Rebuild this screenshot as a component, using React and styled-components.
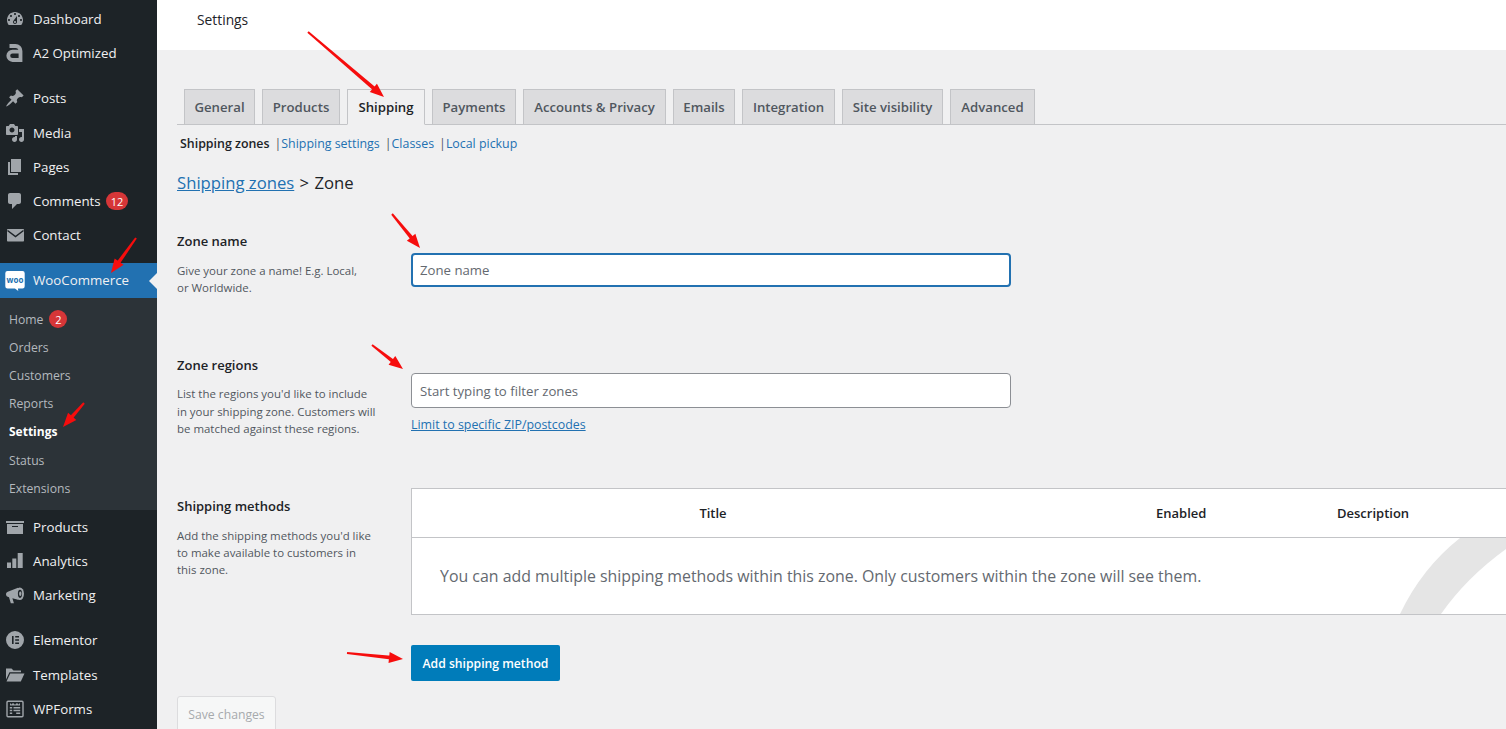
import React from 'react';
import styled, { createGlobalStyle } from 'styled-components';

const GlobalStyle = createGlobalStyle`
  html, body {
    margin: 0;
    padding: 0;
    height: 729px;
    overflow: hidden;
    background: #f0f0f1;
    font-family: "Open Sans", "Noto Sans", sans-serif;
  }
  * { box-sizing: border-box; }
`;

const Page = styled.div`
  position: relative;
  display: flex;
  width: 1506px;
  height: 729px;
  overflow: hidden;
`;

const Sidebar = styled.nav`
  width: 157px;
  flex: none;
  padding-top: 2.05px;
  background: #1d2327;
`;

const MenuItem = styled.div`
  position: relative;
  display: flex;
  align-items: center;
  gap: 8px;
  height: ${(p) => (p.$current ? '35px' : '34.25px')};
  margin-top: ${(p) => (p.$separated ? '10.75px' : '0')};
  padding-left: 5px;
  background: ${(p) => (p.$current ? '#2271b1' : 'transparent')};
  color: #f0f0f1;
  font-size: 13.3px;
  white-space: nowrap;
`;

const MenuLabel = styled.span`
  position: relative;
  top: ${(p) => (p.$current ? '-0.5px' : '0')};
`;

const MenuIcon = styled.svg`
  width: 20px;
  height: 20px;
  flex: none;
  fill: #a0a5aa;
`;

const CurrentNotch = styled.span`
  position: absolute;
  right: 0;
  top: 10px;
  border: 8px solid transparent;
  border-left: 0;
  border-right-color: #f0f0f1;
`;

const Badge = styled.span`
  display: inline-flex;
  align-items: center;
  justify-content: center;
  min-width: 18px;
  height: 18px;
  margin-left: ${(p) => p.$offset}px;
  padding: 0 5px;
  border-radius: 9px;
  background: #d63638;
  color: #fff;
  font-size: 11px;
`;

const SubMenu = styled.div`
  padding: 7px 0 7.5px;
  background: #2c3338;
`;

const SubItem = styled.div`
  display: flex;
  align-items: center;
  height: 28.15px;
  padding-left: 9px;
  color: ${(p) => (p.$active ? '#fff' : '#b4b9be')};
  font-size: ${(p) => (p.$active ? '12px' : '12.2px')};
  font-weight: ${(p) => (p.$active ? 700 : 400)};
`;

const Main = styled.main`
  flex: 1;
  min-width: 0;
`;

const TopBar = styled.header`
  display: flex;
  align-items: center;
  height: 50px;
  padding: 0 0 11px 40px;
  background: #fff;
  color: #1d2327;
  font-size: 13.8px;
`;

const Content = styled.div`
  padding-left: 20px;
`;

const Tabs = styled.div`
  display: flex;
  gap: 7px;
  height: 36px;
  margin-top: 39px;
  padding-left: 7px;
  border-bottom: 1px solid #c3c4c7;
`;

const Tab = styled.div`
  width: ${(p) => p.$width}px;
  height: 36px;
  border: 1px solid #c3c4c7;
  border-bottom-color: ${(p) => (p.$active ? '#f0f0f1' : '#c3c4c7')};
  background: ${(p) => (p.$active ? '#f0f0f1' : '#dcdcde')};
  color: ${(p) => (p.$active ? '#1d2327' : '#50575e')};
  font-size: 13.2px;
  font-weight: 600;
  line-height: 34px;
  text-align: center;
  white-space: nowrap;
`;

const SubNav = styled.div`
  display: flex;
  align-items: center;
  height: 18px;
  margin-top: 9px;
  padding-left: 3px;
  color: #50575e;
  font-size: 12.4px;
`;

const SubNavCurrent = styled.span`
  color: #1d2327;
  font-weight: 600;
`;

const SubNavLink = styled.span`
  color: #2271b1;
`;

const SubNavBar = styled.span`
  margin-left: 5px;
`;

const Heading = styled.h2`
  height: 24px;
  margin: 19px 0 0;
  color: #1d2327;
  font-size: 16.7px;
  font-weight: 500;
  line-height: 24px;
  word-spacing: 1px;
`;

const HeadingLink = styled.span`
  color: #2271b1;
  text-decoration: underline;
  word-spacing: 0;
`;

const FormRow = styled.section`
  display: grid;
  grid-template-columns: 234px 1fr;
  align-items: start;
  margin-top: ${(p) => p.$top}px;
`;

const RowInfo = styled.div`
  padding-top: ${(p) => p.$offset || 0}px;
`;

const RowField = styled.div`
  padding-top: ${(p) => p.$offset || 0}px;
`;

const RowLabel = styled.div`
  height: 18px;
  margin-bottom: 11.5px;
  color: #1d2327;
  font-size: 13px;
  font-weight: 600;
  line-height: 18px;
`;

const RowHelp = styled.p`
  margin: 0;
  color: #50575e;
  font-size: 11.45px;
  line-height: 17.2px;
  white-space: nowrap;
`;

const TextField = styled.input`
  display: block;
  width: 600px;
  height: ${(p) => (p.$focused ? '34px' : '35px')};
  padding: ${(p) => (p.$focused ? '0 7px' : '2px 8px 0')};
  border: ${(p) => (p.$focused ? '2px solid #2271b1' : '1px solid #8c8f94')};
  border-radius: 4px;
  background: #fff;
  font-family: inherit;
  font-size: 13.2px;
  outline: none;
  &::placeholder {
    color: #646970;
    opacity: 1;
  }
`;

const PostcodeLink = styled.a`
  display: block;
  margin-top: 9px;
  color: #2271b1;
  font-size: 12.4px;
  line-height: 16px;
  text-decoration: underline;
`;

const MethodsTable = styled.div`
  width: 1100px;
  border: 1px solid #c3c4c7;
  background: #fff;
`;

const TableHead = styled.div`
  display: grid;
  grid-template-columns: 602px 323px 1fr;
  align-items: center;
  height: 49px;
  border-bottom: 1px solid #c3c4c7;
  color: #1d2327;
  font-size: 13px;
  font-weight: 600;
`;

const TitleCell = styled.div`
  text-align: center;
`;

const EnabledCell = styled.div`
  padding-left: 142px;
`;

const TableBody = styled.div`
  position: relative;
  display: flex;
  align-items: center;
  height: 76px;
  padding-left: 28px;
  overflow: hidden;
  color: #646970;
  font-size: 15.9px;
`;

const Watermark = styled.svg`
  position: absolute;
  left: 988px;
  top: 0;
  width: 106px;
  height: 76px;
  fill: #e5e5e5;
`;

const ButtonRow = styled.div`
  margin-top: 30px;
  padding-left: 234px;
`;

const AddButton = styled.button`
  display: block;
  width: 149px;
  height: 36px;
  border: 0;
  border-radius: 2px;
  background: #007cba;
  color: #fff;
  font-family: inherit;
  font-size: 12.2px;
  font-weight: 600;
`;

const SaveButton = styled.button`
  display: block;
  width: 99px;
  height: 36px;
  margin-top: 15px;
  border: 1px solid #dcdcde;
  border-radius: 3px;
  background: #f6f7f7;
  color: #a7aaad;
  font-family: inherit;
  font-size: 12.2px;
`;

const ArrowLayer = styled.svg`
  position: absolute;
  left: 0;
  top: 0;
  width: 1506px;
  height: 729px;
  pointer-events: none;
`;

const icons = {
  dashboard: (
    <path d="M3.76 16h12.48c1.1-1.37 1.76-3.11 1.76-5 0-4.42-3.58-8-8-8s-8 3.58-8 8c0 1.89.66 3.63 1.76 5zM10 4c.55 0 1 .45 1 1s-.45 1-1 1-1-.45-1-1 .45-1 1-1zM6 6c.55 0 1 .45 1 1s-.45 1-1 1-1-.45-1-1 .45-1 1-1zm8 0c.55 0 1 .45 1 1s-.45 1-1 1-1-.45-1-1 .45-1 1-1zm-5.37 5.55L12 7v6c0 1.1-.9 2-2 2s-2-.9-2-2c0-.57.24-1.08.63-1.45zM4 10c.55 0 1 .45 1 1s-.45 1-1 1-1-.45-1-1 .45-1 1-1zm12 0c.55 0 1 .45 1 1s-.45 1-1 1-1-.45-1-1 .45-1 1-1zm-5 3c0-.55-.45-1-1-1s-1 .45-1 1 .45 1 1 1 1-.45 1-1z" fillRule="evenodd" />
  ),
  a2: (
    <path d="M4.5 3h6a5 5 0 0 1 5 5v9H7.5a4.2 4.2 0 0 1 0-8.4h8" fill="none" stroke="#a0a5aa" strokeWidth="3.8" />
  ),
  pin: (
    <path d="M10.44 3.02l1.82-1.82 6.36 6.35-1.83 1.82c-1.05-.68-2.48-.57-3.41.36l-.75.75c-.92.93-1.04 2.35-.35 3.41l-1.83 1.82-2.41-2.41-2.8 2.79c-.42.42-3.38 2.71-3.8 2.29s1.86-3.39 2.28-3.81l2.79-2.79L4.1 9.36l1.83-1.82c1.05.69 2.48.57 3.4-.36l.75-.75c.93-.92 1.05-2.35.36-3.41z" />
  ),
  media: (
    <path d="M13 11V4c0-.55-.45-1-1-1h-1.67L9 1H5L3.67 3H2c-.55 0-1 .45-1 1v7c0 .55.45 1 1 1h10c.55 0 1-.45 1-1zM7 4.5c1.38 0 2.5 1.12 2.5 2.5S8.38 9.5 7 9.5 4.5 8.38 4.5 7 5.62 4.5 7 4.5zM14 6h5v10.5c0 1.38-1.12 2.5-2.5 2.5S14 17.88 14 16.5s1.12-2.5 2.5-2.5c.17 0 .34.02.5.05V9h-3V6zm-4 8.05V13h2v3.5c0 1.38-1.12 2.5-2.5 2.5S7 17.88 7 16.5 8.12 14 9.5 14c.17 0 .34.02.5.05z" />
  ),
  pages: <path d="M6 15V2h10v13H6zm-1 1h8v2H3V5h2v11z" />,
  comment: (
    <path d="M5 2h9c1.1 0 2 .9 2 2v7c0 1.1-.9 2-2 2h-2l-5 5v-5H5c-1.1 0-2-.9-2-2V4c0-1.1.9-2 2-2z" />
  ),
  mail: (
    <>
      <rect x="2" y="4" width="17" height="12.5" rx="0.8" />
      <path d="M2.5 5.5L10.5 11.5L18.5 5.5" fill="none" stroke="#1d2327" strokeWidth="1.5" />
    </>
  ),
  woo: (
    <>
      <path d="M2.5 0h15a2.2 2.2 0 0 1 2.2 2.2v13a2.2 2.2 0 0 1-2.2 2.2h-4.6l.4 2.6-3.3-2.6H2.500a2.200 2.200 0 0 1-2.200-2.200v-13a2.200 2.200 0 0 1 2.200-2.200z" fill="#fff" />
      <text x="10" y="11.500" textAnchor="middle" fontSize="8" fontWeight="700" fill="#2271b1">woo</text>
    </>
  ),
  box: <path d="M19 4v2H1V4h18zM2 7h16v10H2V7zm11 3V9H7v1h6z" fillRule="evenodd" />,
  bars: (
    <>
      <rect x="2" y="11.5" width="4" height="5.5" />
      <rect x="7.3" y="7.5" width="4" height="9.5" />
      <rect x="12.7" y="2" width="5" height="15" />
    </>
  ),
  megaphone: (
    <>
      <path d="M1 9.2c0-1.3.6-2 1.8-2.5L13 2.8v12l-5.6-1.6 1.5 5H5.8L4 12.2C2 11.8 1 10.8 1 9.2z" />
      <ellipse cx="14.8" cy="8.8" rx="4.2" ry="6.3" />
      <ellipse cx="15" cy="8.8" rx="2.1" ry="4.1" fill="#1d2327" />
      <ellipse cx="15.3" cy="8.8" rx="1.2" ry="2.2" />
    </>
  ),
  elementor: (
    <path d="M10 1a9 9 0 1 0 0 18 9 9 0 0 0 0-18zM7 6h1.6v8H7zm3.2 0H14v1.6h-3.8zm0 3.2H14v1.6h-3.8zm0 3.2H14V14h-3.8z" fillRule="evenodd" />
  ),
  folder: (
    <>
      <path d="M1 3.5h5.5l2 2H16v1.8H4.5L1 14.5z" />
      <path d="M5.2 8.6H19.5L15.8 16.5H1.5z" />
    </>
  ),
  forms: (
    <>
      <path d="M3 1.500h14A1.700 1.700 0 0 1 18.700 3.200v13.600a1.700 1.700 0 0 1-1.700 1.700H3a1.700 1.700 0 0 1-1.700-1.700V3.200A1.700 1.700 0 0 1 3 1.500zm.2 1.400a.5.5 0 0 0-.5.5v13.200a.5.5 0 0 0 .5.5h13.600a.5.5 0 0 0 .5-.5V3.400a.5.5 0 0 0-.5-.5z" fillRule="evenodd" />
      <path d="M5 4l1.500 1.500L8 4l2 1.700L12 4l1.500 1.500L15 4v2.400H5zM4.800 8h2.400v1.500H4.800zm3.700 0h6.700v1.500H8.500zm-3.700 2.700h2.400v1.500H4.800zm3.700 0h6.700v1.500H8.500zm-3.700 2.700h2.400v1.500H4.800zm6.400 0h4v1.500h-4z" />
    </>
  ),
};

const topMenu = [
  { icon: 'dashboard', label: 'Dashboard' },
  { icon: 'a2', label: 'A2 Optimized' },
  { icon: 'pin', label: 'Posts', separated: true },
  { icon: 'media', label: 'Media' },
  { icon: 'pages', label: 'Pages' },
  { icon: 'comment', label: 'Comments', badge: '12' },
  { icon: 'mail', label: 'Contact' },
];

const subMenu = ['Orders', 'Customers', 'Reports', 'Settings', 'Status', 'Extensions'];

const bottomMenu = [
  { icon: 'box', label: 'Products' },
  { icon: 'bars', label: 'Analytics' },
  { icon: 'megaphone', label: 'Marketing' },
  { icon: 'elementor', label: 'Elementor', separated: true },
  { icon: 'folder', label: 'Templates' },
  { icon: 'forms', label: 'WPForms' },
];

const tabs = [
  ['General', 71],
  ['Products', 78],
  ['Shipping', 78],
  ['Payments', 84],
  ['Accounts & Privacy', 143],
  ['Emails', 62],
  ['Integration', 93],
  ['Site visibility', 101],
  ['Advanced', 85],
];

const arrows = [
  [308, 32, 384, 97],
  [136, 238, 111, 273],
  [84, 403, 63, 427],
  [392, 214, 420, 248],
  [372, 345, 403, 369],
  [347, 653, 403, 659],
];

const Arrow = ({ from, to }) => {
  const [x1, y1] = from;
  const [x2, y2] = to;
  const angle = Math.atan2(y2 - y1, x2 - x1);
  const at = (back, side) => {
    const bx = x2 - back * Math.cos(angle);
    const by = y2 - back * Math.sin(angle);
    return `${bx - side * Math.sin(angle)},${by + side * Math.cos(angle)}`;
  };
  const length = Math.hypot(x2 - x1, y2 - y1);
  return (
    <g fill="#f60d0d">
      <polygon points={`${at(length, 1)} ${at(12, 1.9)} ${at(12, -1.9)} ${at(length, -1)}`} />
      <polygon points={`${x2},${y2} ${at(14, 5.5)} ${at(14, -5.5)}`} />
    </g>
  );
};

const Item = ({ item }) => (
  <MenuItem $separated={item.separated}>
    <MenuIcon viewBox="0 0 20 20">{icons[item.icon]}</MenuIcon>
    <MenuLabel>{item.label}</MenuLabel>
    {item.badge && <Badge $offset={-3}>{item.badge}</Badge>}
  </MenuItem>
);

export default function App() {
  return (
    <Page>
      <GlobalStyle />
      <Sidebar>
        {topMenu.map((item) => (
          <Item key={item.label} item={item} />
        ))}
        <MenuItem $current $separated>
          <MenuIcon viewBox="0 0 20 20">{icons.woo}</MenuIcon>
          <MenuLabel $current>WooCommerce</MenuLabel>
          <CurrentNotch />
        </MenuItem>
        <SubMenu>
          <SubItem>
            Home
            <Badge $offset={6}>2</Badge>
          </SubItem>
          {subMenu.map((label) => (
            <SubItem key={label} $active={label === 'Settings'}>
              {label}
            </SubItem>
          ))}
        </SubMenu>
        {bottomMenu.map((item) => (
          <Item key={item.label} item={item} />
        ))}
      </Sidebar>

      <Main>
        <TopBar>Settings</TopBar>
        <Content>
          <Tabs>
            {tabs.map(([label, width]) => (
              <Tab key={label} $width={width} $active={label === 'Shipping'}>
                {label}
              </Tab>
            ))}
          </Tabs>

          <SubNav>
            <SubNavCurrent>Shipping zones</SubNavCurrent>
            <SubNavBar>|</SubNavBar>
            <SubNavLink>Shipping settings</SubNavLink>
            <SubNavBar>|</SubNavBar>
            <SubNavLink>Classes</SubNavLink>
            <SubNavBar>|</SubNavBar>
            <SubNavLink>Local pickup</SubNavLink>
          </SubNav>

          <Heading>
            <HeadingLink>Shipping zones</HeadingLink> &gt; Zone
          </Heading>

          <FormRow $top={37}>
            <RowInfo>
              <RowLabel>Zone name</RowLabel>
              <RowHelp>
                Give your zone a name! E.g. Local,
                <br />
                or Worldwide.
              </RowHelp>
            </RowInfo>
            <RowField $offset={21}>
              <TextField $focused placeholder="Zone name" />
            </RowField>
          </FormRow>

          <FormRow $top={60}>
            <RowInfo>
              <RowLabel>Zone regions</RowLabel>
              <RowHelp>
                List the regions you'd like to include
                <br />
                in your shipping zone. Customers will
                <br />
                be matched against these regions.
              </RowHelp>
            </RowInfo>
            <RowField $offset={17}>
              <TextField placeholder="Start typing to filter zones" />
              <PostcodeLink>Limit to specific ZIP/postcodes</PostcodeLink>
            </RowField>
          </FormRow>

          <FormRow $top={51}>
            <RowInfo $offset={9}>
              <RowLabel>Shipping methods</RowLabel>
              <RowHelp>
                Add the shipping methods you'd like
                <br />
                to make available to customers in
                <br />
                this zone.
              </RowHelp>
            </RowInfo>
            <RowField>
              <MethodsTable>
                <TableHead>
                  <TitleCell>Title</TitleCell>
                  <EnabledCell>Enabled</EnabledCell>
                  <div>Description</div>
                </TableHead>
                <TableBody>
                  <Watermark viewBox="0 0 106 76">
                    <path d="M0 76Q22 30 60 0H106V11Q66 40 41 76Z" />
                  </Watermark>
                  You can add multiple shipping methods within this zone. Only customers within the
                  zone will see them.
                </TableBody>
              </MethodsTable>
            </RowField>
          </FormRow>

          <ButtonRow>
            <AddButton>Add shipping method</AddButton>
          </ButtonRow>
          <SaveButton disabled>Save changes</SaveButton>
        </Content>
      </Main>

      <ArrowLayer viewBox="0 0 1506 729">
        {arrows.map(([x1, y1, x2, y2]) => (
          <Arrow key={`${x1}-${y1}`} from={[x1, y1]} to={[x2, y2]} />
        ))}
      </ArrowLayer>
    </Page>
  );
}
